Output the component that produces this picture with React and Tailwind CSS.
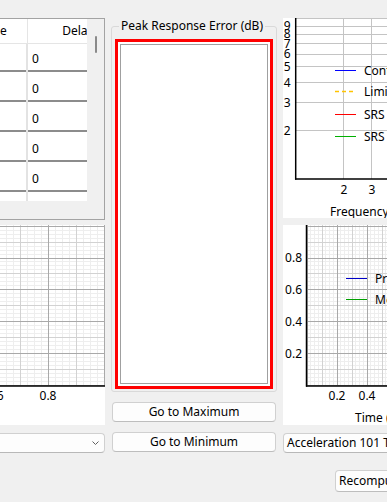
const FONT = "'Noto Sans', sans-serif";
const GRID_COLORS = ['#eeeeee', '#d2d2d2', '#a9a9a9'];

const crisp = (v) => Math.round(v - 0.5) + 0.5;

// major / medium / minor grid lines of the time plots (4 minors per medium, 2 mediums per major)
function gridLines({ x0, dx, xFrom, xTo, y0, dy, yFrom, yTo }) {
  const lines = [];
  for (let k = -80; k <= 80; k++) {
    const x = x0 + k * dx;
    if (x < xFrom || x > xTo) continue;
    const level = k % 8 === 0 ? 2 : k % 4 === 0 ? 1 : 0;
    lines.push({ level, x1: crisp(x), x2: crisp(x), y1: yFrom, y2: yTo });
  }
  for (let k = 0; k <= 80; k++) {
    const y = y0 - k * dy;
    if (y < yFrom || y > yTo) continue;
    const level = k % 8 === 0 ? 2 : k % 4 === 0 ? 1 : 0;
    lines.push({ level, x1: xFrom, x2: xTo, y1: crisp(y), y2: crisp(y) });
  }
  return lines.sort((a, b) => a.level - b.level);
}

function Label({ x, y, anchor = 'middle', children }) {
  return (
    <text x={x} y={y} textAnchor={anchor} fontSize="12" fontFamily={FONT} fill="#000">
      {children}
    </text>
  );
}

function LeftTimeChart() {
  const lines = gridLines({ x0: 48, dx: 7, xFrom: -95, xTo: 105, y0: 385, dy: 31.75 / 8, yFrom: 225, yTo: 385 });
  return (
    <svg width="200" height="200" viewBox="-95 225 200 200" className="block">
      {lines.map((l, i) => (
        <line key={i} {...l} stroke={GRID_COLORS[l.level]} strokeWidth="1" />
      ))}
      <line x1="-95" x2="105" y1="386" y2="386" stroke="#000" strokeWidth="1.5" />
      <Label x={3.5} y={400} anchor="end">0.6</Label>
      <Label x={48} y={400}>0.8</Label>
    </svg>
  );
}

function RightTimeChart() {
  const lines = gridLines({ x0: 307, dx: 3.75, xFrom: 307, xTo: 533, y0: 385, dy: 31.75 / 8, yFrom: 225, yTo: 385 });
  const yTicks = [0.8, 0.6, 0.4, 0.2];
  return (
    <svg width="250" height="200" viewBox="283 225 250 200" className="block">
      {lines.map((l, i) => (
        <line key={i} {...l} stroke={GRID_COLORS[l.level]} strokeWidth="1" />
      ))}
      <line x1="306.5" x2="306.5" y1="225" y2="386.7" stroke="#000" strokeWidth="1.5" />
      <line x1="306" x2="533" y1="386" y2="386" stroke="#000" strokeWidth="1.5" />
      {yTicks.map((v) => (
        <Label key={v} x={302} y={385 - 158.75 * v + 4.3} anchor="end">
          {v.toFixed(1)}
        </Label>
      ))}
      <Label x={337} y={400}>0.2</Label>
      <Label x={367} y={400}>0.4</Label>
      <Label x={397} y={400}>0.6</Label>
      <Label x={355} y={422} anchor="start">Time (s)</Label>

      <line x1="346" x2="367" y1="278.5" y2="278.5" stroke="#0000c8" strokeWidth="1" />
      <Label x={375} y={282.5} anchor="start">Predicted</Label>
      <line x1="346" x2="367" y1="299.5" y2="299.5" stroke="#00a000" strokeWidth="1" />
      <Label x={375} y={303.5} anchor="start">Measured</Label>
    </svg>
  );
}

function FrequencyChart() {
  const yv = (v) => 178.4 - 159.7 * Math.log10(v);
  const xv = (v) => 296.1 + 159 * Math.log10(v);
  const yTicks = [2, 3, 4, 5, 6, 7, 8, 9];
  const legend = [
    { y: 70, color: '#0000ff', dash: null, text: 'Control' },
    { y: 91, color: '#ffc400', dash: '4 3', text: 'Limits' },
    { y: 114, color: '#ff0000', dash: null, text: 'SRS Reference' },
    { y: 136, color: '#00b000', dash: null, text: 'SRS Control' },
  ];
  return (
    <svg width="250" height="200" viewBox="283 18 250 200" className="block">
      {[...yTicks, 10].map((v) => (
        <line key={v} x1="296" x2="533" y1={crisp(yv(v))} y2={crisp(yv(v))} stroke="#c4c4c4" strokeWidth="1" />
      ))}
      {[2, 3, 4].map((v) => (
        <line key={v} x1={crisp(xv(v))} x2={crisp(xv(v))} y1="18" y2="179" stroke="#c4c4c4" strokeWidth="1" />
      ))}
      <line x1="295.7" x2="295.7" y1="18" y2="179.7" stroke="#000" strokeWidth="1.5" />
      <line x1="295" x2="533" y1="179" y2="179" stroke="#000" strokeWidth="1.5" />
      {yTicks.map((v) => (
        <Label key={v} x={290.5} y={yv(v) + 4.3} anchor="end">
          {v}
        </Label>
      ))}
      <Label x={xv(2)} y={194.3}>2</Label>
      <Label x={xv(3)} y={194.3}>3</Label>
      <Label x={330} y={216} anchor="start">Frequency (Hz)</Label>
      {legend.map((l) => (
        <g key={l.text}>
          <line
            x1="335"
            x2="356"
            y1={l.y + 0.5}
            y2={l.y + 0.5}
            stroke={l.color}
            strokeWidth={l.dash ? 1.4 : 1}
            strokeDasharray={l.dash || undefined}
          />
          <Label x={364} y={l.y + 4.5} anchor="start">{l.text}</Label>
        </g>
      ))}
    </svg>
  );
}

function PulseTable() {
  const rows = [0, 1, 2, 3, 4, 5];
  return (
    <div className="h-[202px] border border-[#a3a3a3] bg-[#f0f0f0] flex flex-col">
      <div className="h-[182px] flex">
        <div className="w-[181px] bg-white overflow-hidden">
          <div className="h-[25px] flex border-b border-[#e5e5e5] whitespace-nowrap">
            <div className="w-[22px] shrink-0" />
            <div className="w-[100px] shrink-0 border-r border-[#e5e5e5] flex items-center justify-center">Amplitude</div>
            <div className="w-[100px] shrink-0 flex items-center justify-center">Delay</div>
          </div>
          {rows.map((r) => (
            <div key={r} className="h-[30px] flex">
              <div className="w-[22px] shrink-0" />
              <div className="w-[98px] shrink-0 mt-[3px] h-[25px] border-b-2 border-[#8c8c8c] pl-[4px] leading-[23px]">1</div>
              <div className="w-[2px] shrink-0 bg-[#e3e3e3]" />
              <div className="w-[100px] shrink-0 mt-[3px] h-[25px] border-b-2 border-[#8c8c8c] pl-[4px] leading-[23px]">0</div>
            </div>
          ))}
        </div>
        <div className="w-[17px] pt-[17px] pl-[8px]">
          <div className="w-[2px] h-[17px] rounded-full bg-[#8a8a8a]" />
        </div>
      </div>
    </div>
  );
}

function Chevron() {
  return (
    <svg width="7" height="4" viewBox="0 0 7 4" className="block">
      <polyline points="0.5,0.5 3.5,3.5 6.5,0.5" fill="none" stroke="#606060" strokeWidth="1" />
    </svg>
  );
}

export default function App() {
  return (
    <div className="w-[387px] h-[502px] overflow-hidden bg-[#f0f0f0] text-black text-[12px] font-['Noto_Sans',sans-serif] flex gap-[6px] pt-[18px]">
      <div className="w-[105px] shrink-0 overflow-hidden">
        <div className="ml-[-95px] w-[200px] flex flex-col">
          <PulseTable />
          <div className="mt-[5px] h-[200px] bg-white">
            <LeftTimeChart />
          </div>
          <div className="mt-[8px] h-[20px] bg-[#fdfdfd] border border-[#d0d0d0] border-b-[#b8b8b8] rounded-[4px] flex items-center justify-end pr-[5px]">
            <Chevron />
          </div>
        </div>
      </div>

      <div className="w-[166px] shrink-0 flex flex-col">
        <fieldset className="min-w-0 border border-[#d9d9d9] rounded-[3px] px-[3px] pb-[2px]">
          <legend className="ml-[4px] px-[2px] leading-[16px] whitespace-nowrap">Peak Response Error (dB)</legend>
          <div className="mt-[5px] h-[350px] border-[3px] border-[#ff0000] bg-white p-[2px]">
            <div className="h-full border border-[#a0a0a0] bg-white" />
          </div>
        </fieldset>
        <button className="mt-[10px] mx-[1px] h-[20px] bg-[#fdfdfd] border border-[#d0d0d0] border-b-[#bdbdbd] rounded-[4px] leading-[18px]">
          Go to Maximum
        </button>
        <button className="mt-[10px] mx-[1px] h-[20px] bg-[#fdfdfd] border border-[#d0d0d0] border-b-[#bdbdbd] rounded-[4px] leading-[18px]">
          Go to Minimum
        </button>
      </div>

      <div className="flex-1 min-w-0 overflow-hidden">
        <div className="w-[250px] flex flex-col">
          <div className="h-[200px] bg-white">
            <FrequencyChart />
          </div>
          <div className="mt-[7px] h-[200px] bg-white">
            <RightTimeChart />
          </div>
          <div className="mt-[8px] h-[20px] bg-[#fdfdfd] border border-[#d0d0d0] border-b-[#b8b8b8] rounded-[4px] pl-[3px] leading-[18px] whitespace-nowrap">
            Acceleration 101 Time History
          </div>
          <div className="mt-[17px] pl-[52px] flex">
            <button className="h-[22px] px-[3px] bg-[#fdfdfd] border border-[#d0d0d0] border-b-[#bdbdbd] rounded-[4px] leading-[20px] whitespace-nowrap">
              Recompute Shape
            </button>
          </div>
        </div>
      </div>
    </div>
  );
}
